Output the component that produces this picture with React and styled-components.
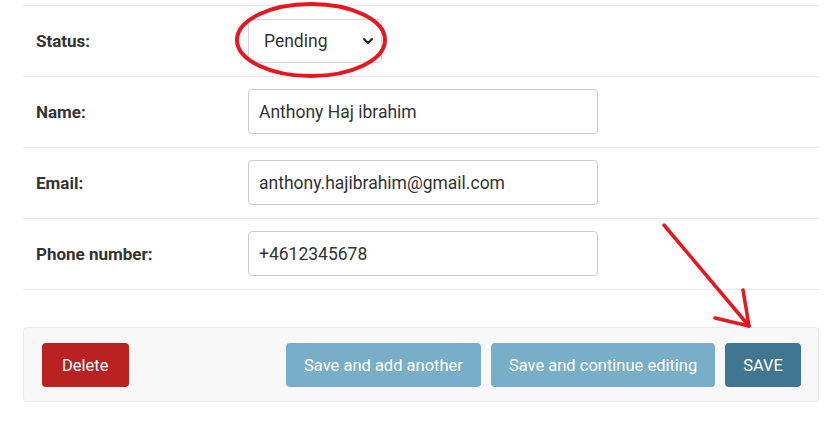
import React from "react";
import styled, { createGlobalStyle } from "styled-components";

const GlobalStyle = createGlobalStyle`
  html, body {
    margin: 0;
    padding: 0;
    background: #ffffff;
    font-family: Roboto, "Liberation Sans", Arial, sans-serif;
    color: #333333;
  }
`;

const Page = styled.div`
  position: relative;
  width: 833px;
  height: 435px;
  padding: 5px 14px 0 23px;
  box-sizing: border-box;
`;

const Fieldset = styled.div`
  border-top: 1px solid #e8e8e8;
`;

const FormRow = styled.div`
  display: flex;
  align-items: center;
  height: 70px;
  padding-left: 13px;
  border-bottom: 1px solid #e8e8e8;
`;

const Label = styled.label`
  width: 212px;
  font-size: 17px;
  font-weight: 700;
  color: #333333;
`;

const TextInput = styled.div`
  width: 350px;
  height: 45px;
  margin-top: -1px;
  box-sizing: border-box;
  border: 1px solid #cccccc;
  border-radius: 4px;
  padding: 0 10px;
  display: flex;
  align-items: center;
  font-size: 17.5px;
  color: #333333;
  background: #ffffff;
`;

const SelectBox = styled.div`
  width: 134px;
  height: 44px;
  margin-top: -1px;
  box-sizing: border-box;
  border: 1px solid #d6d6d6;
  border-radius: 4px;
  padding: 0 6px 0 15px;
  display: flex;
  align-items: center;
  justify-content: space-between;
  font-size: 17.5px;
  color: #333333;
  background: #ffffff;
`;

const SubmitRow = styled.div`
  margin-top: 37px;
  display: flex;
  align-items: center;
  gap: 10px;
  padding: 15px 17px 14px 18px;
  background: #f8f8f8;
  border: 1px solid #eaeaea;
  border-radius: 4px;
`;

const Button = styled.button`
  height: 44px;
  padding: 0 ${(p) => p.$pad || 18}px;
  border: none;
  border-radius: 4px;
  font-family: Roboto, "Liberation Sans", Arial, sans-serif;
  font-size: 16.5px;
  color: #ffffff;
  background: ${(p) => p.$bg};
  cursor: pointer;
`;

const Spacer = styled.div`
  flex: 1;
`;

const Annotations = styled.svg`
  position: absolute;
  left: 0;
  top: 0;
  pointer-events: none;
`;

const Chevron = () => (
  <svg width="14" height="14" viewBox="0 0 14 14">
    <path d="M3 5 L7 9 L11 5" fill="none" stroke="#222" strokeWidth="2" strokeLinecap="round" strokeLinejoin="round" />
  </svg>
);

const fields = [
  { label: "Name:", value: "Anthony Haj ibrahim" },
  { label: "Email:", value: "anthony.hajibrahim@gmail.com" },
  { label: "Phone number:", value: "+4612345678" },
];

export default function App() {
  return (
    <>
      <GlobalStyle />
      <Page>
        <Fieldset>
          <FormRow>
            <Label>Status:</Label>
            <SelectBox>
              <span>Pending</span>
              <Chevron />
            </SelectBox>
          </FormRow>
          {fields.map((f) => (
            <FormRow key={f.label}>
              <Label>{f.label}</Label>
              <TextInput>{f.value}</TextInput>
            </FormRow>
          ))}
        </Fieldset>
        <SubmitRow>
          <Button $bg="#ba2121" $pad={20}>Delete</Button>
          <Spacer />
          <Button $bg="#79aec8">Save and add another</Button>
          <Button $bg="#79aec8">Save and continue editing</Button>
          <Button $bg="#417690">SAVE</Button>
        </SubmitRow>
        <Annotations width="833" height="435">
          <ellipse cx="311" cy="40" rx="74" ry="36" fill="none" stroke="#e8161e" strokeWidth="4" />
          <path d="M664 225 L749 326" stroke="#e8161e" strokeWidth="3.5" strokeLinecap="round" fill="none" />
          <path d="M743 290 L749 326 L715 318" stroke="#e8161e" strokeWidth="3.5" strokeLinecap="round" strokeLinejoin="round" fill="none" />
        </Annotations>
      </Page>
    </>
  );
}
